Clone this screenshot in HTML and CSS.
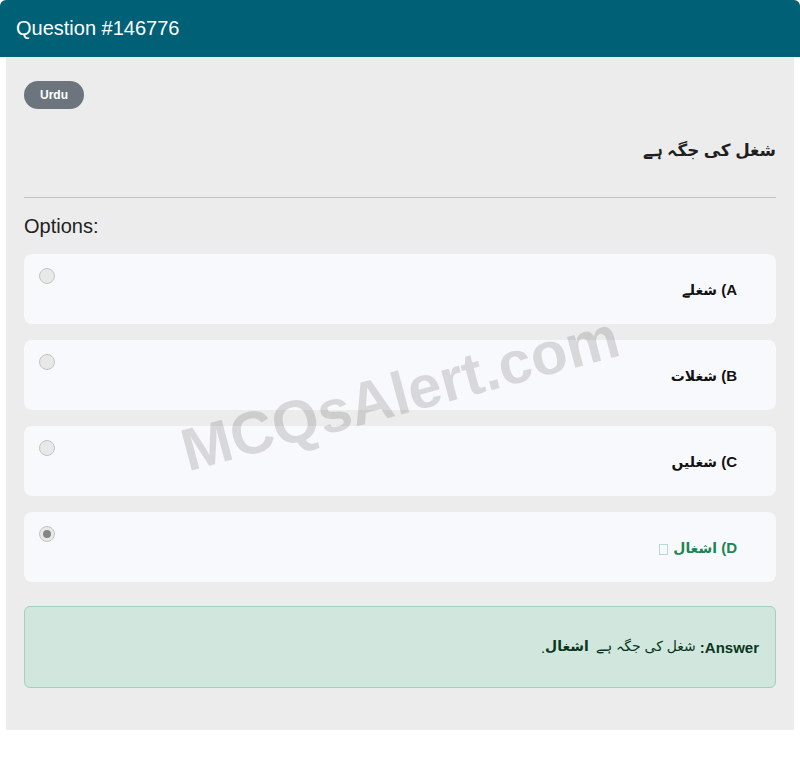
FILE: index.html
```html
<!DOCTYPE html>
<html lang="en">
<head>
<meta charset="utf-8">
<title>Question #146776</title>
<link rel="stylesheet" href="styles.css">
</head>
<body>
<div class="card">
  <div class="card-header">Question #146776</div>
  <div class="card-body">
    <span class="badge">Urdu</span>
    <h2 class="question" dir="rtl"><span class="ur">شغل کی جگہ ہے</span></h2>
    <hr class="divider">
    <div class="options-title">Options:</div>
    <div class="options">
      <div class="option">
        <span class="radio"></span>
        <span class="label" dir="rtl">A) <span class="ur">شغلے</span></span>
      </div>
      <div class="option">
        <span class="radio"></span>
        <span class="label" dir="rtl">B) <span class="ur">شغلات</span></span>
      </div>
      <div class="option">
        <span class="radio"></span>
        <span class="label" dir="rtl">C) <span class="ur">شغلیں</span></span>
      </div>
      <div class="option">
        <span class="radio checked"></span>
        <span class="label correct" dir="rtl">D) <span class="ur">اشغال</span> <span class="tofu"></span></span>
      </div>
    </div>
    <div class="answer" dir="rtl"><b class="ans-key">Answer:</b>&nbsp;<span class="ur">شغل کی جگہ ہے&nbsp; <b>اشغال</b></span>.</div>
    <div class="watermark">MCQsAlert.com</div>
  </div>
</div>
</body>
</html>
```
FILE: styles.css
```css
html, body {
  margin: 0;
  padding: 0;
  background: #ffffff;
}
body {
  font-family: "Liberation Sans", "DejaVu Sans", sans-serif;
  color: #212529;
}
.ur {
  font-size: 0.93em;
  line-height: 1;
}
.card {
  width: 800px;
}
.card-header {
  height: 57px;
  line-height: 57px;
  padding: 0 16px;
  background: #006075;
  color: #ffffff;
  font-size: 20px;
  border-radius: 6px 6px 0 0;
}
.card-body {
  position: relative;
  margin: 0 6px;
  padding: 24px 18px 42px;
  background: #ececec;
  overflow: hidden;
}
.badge {
  display: inline-block;
  height: 28px;
  line-height: 28px;
  padding: 0 16px;
  border-radius: 14px;
  background: #6c757d;
  color: #ffffff;
  font-size: 12px;
  font-weight: bold;
  vertical-align: top;
}
.question {
  margin: 28px 0 0;
  height: 26px;
  font-size: 18px;
  line-height: 26px;
  font-weight: bold;
  text-align: right;
  color: #1f1f1f;
}
.divider {
  margin: 34px 0 0;
  border: 0;
  border-top: 1px solid #c2c2c2;
  height: 0;
}
.options-title {
  margin-top: 16px;
  font-size: 20px;
  line-height: 24px;
  color: #222222;
}
.options {
  margin-top: 16px;
  display: flex;
  flex-direction: column;
  gap: 16px;
}
.option {
  display: flex;
  align-items: center;
  height: 70px;
  box-sizing: border-box;
  background: #f8f9fc;
  border-radius: 8px;
  padding: 0 39px 0 15px;
}
.radio {
  align-self: flex-start;
  margin-top: 14px;
  width: 16px;
  height: 16px;
  box-sizing: border-box;
  border: 1px solid #c4c4c4;
  border-radius: 50%;
  background: #e8e8e8;
  display: flex;
  align-items: center;
  justify-content: center;
  flex: none;
}
.radio.checked::after {
  content: "";
  width: 8px;
  height: 8px;
  border-radius: 50%;
  background: #858585;
}
.label {
  flex: 1;
  text-align: right;
  font-size: 15px;
  font-weight: bold;
  color: #111111;
}
.label.correct {
  color: #198754;
}
.tofu {
  display: inline-block;
  width: 7px;
  height: 9px;
  border: 1px solid #b5dcc6;
  vertical-align: -2px;
  margin-right: 1px;
}
.answer {
  margin-top: 24px;
  height: 82px;
  box-sizing: border-box;
  display: flex;
  align-items: center;
  padding: 0 16px;
  background: #d1e7dd;
  border: 1px solid #a3cfbb;
  border-radius: 6px;
  font-size: 15px;
  color: #0a3622;
  white-space: pre;
}
.answer .ur {
  font-weight: normal;
}
.answer b {
  font-weight: bold;
}
.watermark {
  position: absolute;
  left: 0;
  right: 0;
  top: 302px;
  text-align: center;
  font-size: 60px;
  font-weight: bold;
  color: rgba(0, 0, 0, 0.13);
  transform: rotate(-15deg);
  pointer-events: none;
  white-space: nowrap;
}
```
